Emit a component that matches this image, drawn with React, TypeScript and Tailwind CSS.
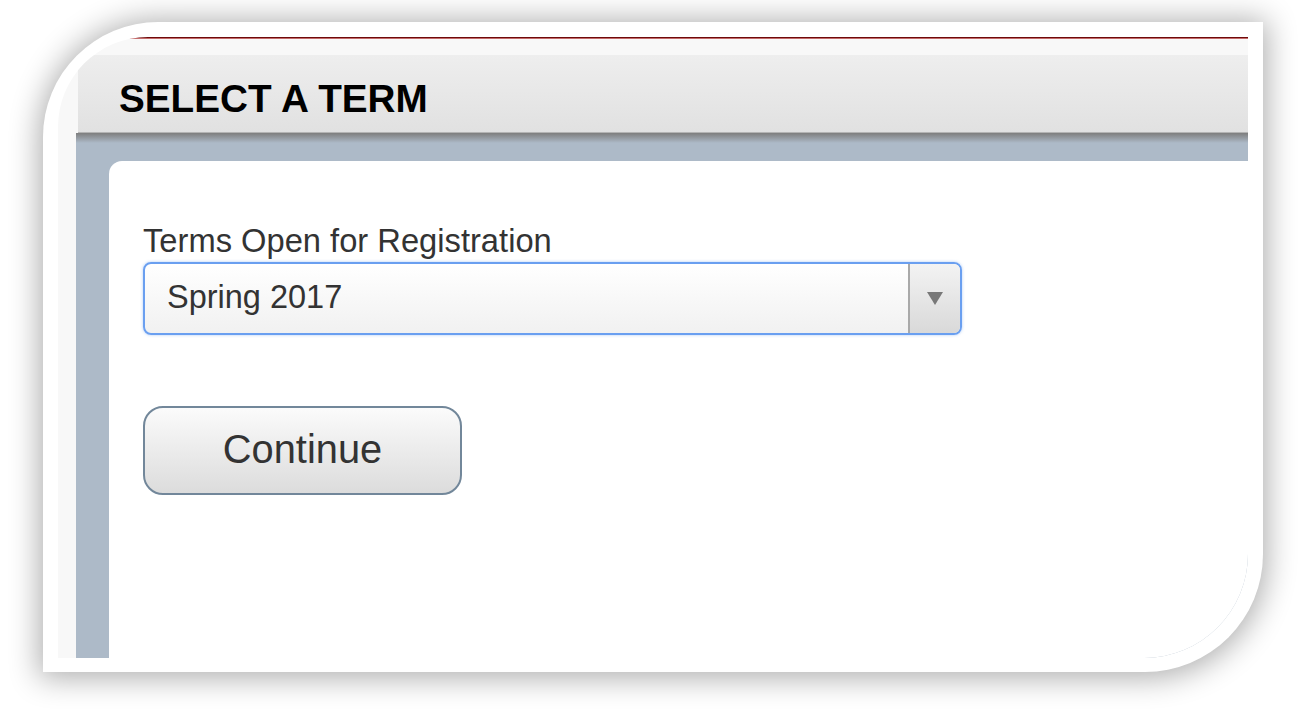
import React from "react";

export default function App() {
  return (
    <div
      className="w-[1314px] h-[713px] bg-white pl-[43px] pt-[22px] overflow-hidden"
      style={{ fontFamily: '"Liberation Sans", Arial, sans-serif' }}
    >
      <div className="w-[1220px] h-[650px] bg-white rounded-tl-[115px] rounded-br-[118px] shadow-[0_2px_30px_4px_rgba(0,0,0,0.32)] p-[15px] pb-[14px]">
        <div className="w-full h-full rounded-tl-[90px] rounded-br-[104px] overflow-hidden bg-[#f8f8f8] flex flex-col">
          <div className="h-[1px] bg-[#6e0b0b] shrink-0" />
          <div className="h-[1px] bg-[#c46a6a] shrink-0" />
          <div className="h-[16px] shrink-0" />
          <div className="pl-[18px] flex flex-col flex-1">
            <div className="ml-[2px] h-[78px] shrink-0 bg-gradient-to-b from-[#eeeeee] to-[#e1e1e1] border-b border-[#b4b4b4] pl-[41px] pt-[22px]">
              <h1 className="text-[38.7px] leading-[44px] font-bold text-black">
                SELECT A TERM
              </h1>
            </div>
            <div className="flex-1 bg-[#adbac8] flex flex-col">
              <div className="h-[10px] shrink-0 bg-gradient-to-b from-[#7e7e7e] to-[#adbac8]" />
              <div className="flex-1 pl-[33px] pt-[18px] flex">
                <div className="flex-1 bg-white rounded-tl-[13px] pl-[34px] pt-[62px]">
                  <div className="text-[32.7px] leading-[36px] text-[#333]">
                    Terms Open for Registration
                  </div>
                  <div className="mt-[3px] w-[819px] h-[73px] rounded-[8px] border-2 border-[#6a9ff0] bg-gradient-to-b from-white to-[#f1f1f1] flex overflow-hidden shadow-[0_0_3px_rgba(90,150,240,0.5)]">
                    <div className="flex-1 flex items-center pl-[22px] pb-[2px] text-[32.5px] text-[#333]">
                      Spring 2017
                    </div>
                    <div className="w-[52px] border-l-2 border-[#a9a9a9] bg-gradient-to-b from-[#f3f3f3] to-[#d9d9d9] flex items-center justify-center">
                      <svg width="16" height="13" viewBox="0 0 16 13">
                        <path d="M0 0 H16 L8 13 Z" fill="#787878" />
                      </svg>
                    </div>
                  </div>
                  <button className="mt-[71px] w-[319px] h-[89px] rounded-[20px] border-2 border-[#72879a] bg-gradient-to-b from-[#fbfbfb] to-[#dcdcdc] text-[39.8px] text-[#333] flex items-center justify-center pb-[2px]">
                    Continue
                  </button>
                </div>
              </div>
            </div>
          </div>
        </div>
      </div>
    </div>
  );
}
